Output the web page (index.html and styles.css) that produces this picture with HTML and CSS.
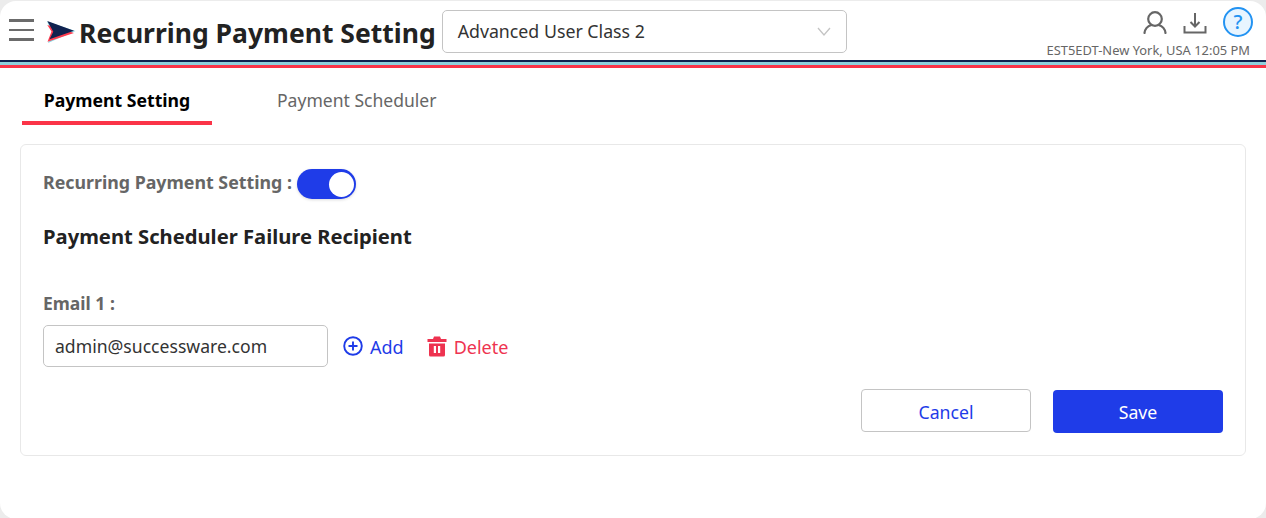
FILE: index.html
```html
<!DOCTYPE html>
<html lang="en">
<head>
<meta charset="utf-8">
<title>Recurring Payment Setting</title>
<link rel="stylesheet" href="styles.css">
</head>
<body>
<div class="app">
  <header class="header">
    <div class="menu-icon"><span></span><span></span><span></span></div>
    <svg class="logo" width="30" height="24" viewBox="0 0 30 24">
      <path d="M1 1.500 L29.500 11 L2 23 L6 12 Z" fill="#8fd8e4"/>
      <path d="M1.300 5 L5.500 11.500 L1.500 21.800 L28 13 Z" fill="#ff3b4e"/>
      <path d="M1.300 1 L28 10.700 L3.500 19.300 L7.300 11.700 Z" fill="#10224f"/>
    </svg>
    <h1 class="title">Recurring Payment Setting</h1>
    <div class="select">
      <span class="select-text">Advanced User Class 2</span>
      <svg class="chevron" width="14" height="9" viewBox="0 0 14 9"><path d="M1 1 L7 8 L13 1" fill="none" stroke="#c4c4c4" stroke-width="1.300"/></svg>
    </div>
    <div class="header-right">
      <div class="icons">
        <svg class="icon-user" width="24" height="23" viewBox="0 0 24 23"><circle cx="12" cy="8" r="6.800" fill="none" stroke="#666" stroke-width="2.200"/><path d="M1.500 22 C2 18 5 15 8.500 14 M22.500 22 C22 18 19 15 15.500 14" fill="none" stroke="#666" stroke-width="2.200" stroke-linecap="round"/></svg>
        <svg class="icon-download" width="24" height="22" viewBox="0 0 24 22"><path d="M12 1 V14 M7.500 10 L12 14.500 L16.500 10" fill="none" stroke="#666" stroke-width="2"/><path d="M1.500 14 V20.500 H22.500 V14" fill="none" stroke="#666" stroke-width="2"/></svg>
        <div class="help">?</div>
      </div>
      <div class="tz">EST5EDT-New York, USA 12:05 PM</div>
    </div>
  </header>
  <div class="stripes"></div>
  <nav class="tabs">
    <div class="tab active">Payment Setting</div>
    <div class="tab">Payment Scheduler</div>
  </nav>
  <main class="card">
    <div class="toggle-row">
      <span class="label toggle-label">Recurring Payment Setting :</span>
      <span class="toggle"><span class="knob"></span></span>
    </div>
    <h2 class="section">Payment Scheduler Failure Recipient</h2>
    <div class="label email-label">Email 1 :</div>
    <div class="email-row">
      <div class="input">admin@successware.com</div>
      <div class="action add">
        <svg width="20" height="20" viewBox="0 0 20 20"><circle cx="10" cy="10" r="8.800" fill="none" stroke="#1f3ce8" stroke-width="1.900"/><path d="M10 5.500 V14.500 M5.500 10 H14.500" stroke="#1f3ce8" stroke-width="1.900"/></svg>
        <span class="action-text">Add</span>
      </div>
      <div class="action delete">
        <svg width="20" height="21" viewBox="0 0 20 21"><path fill="#ee3350" fill-rule="evenodd" d="M7 0.500 H13 L14 3 H19.500 V6 H0.500 V3 H6 Z M2 7.500 H18 V19 Q18 20.500 16.500 20.500 H3.500 Q2 20.500 2 19 Z M6.800 10 V17 H9 V10 Z M11 10 V17 H13.200 V10 Z"/></svg>
        <span class="action-text">Delete</span>
      </div>
    </div>
    <div class="buttons">
      <button class="btn cancel" type="button">Cancel</button>
      <button class="btn save" type="button">Save</button>
    </div>
  </main>
</div>
</body>
</html>
```
FILE: styles.css
```css
* { box-sizing: border-box; }
html, body { margin: 0; padding: 0; height: 100%; }
body {
  background: #ececec;
  font-family: "Noto Sans", "Noto Sans CJK JP", sans-serif;
  overflow: hidden;
}
.app {
  width: 1266px;
  height: 518px;
  margin-top: 1px;
  background: #fff;
  border-radius: 16px;
  overflow: hidden;
}
.header {
  height: 59px;
  display: flex;
  align-items: flex-start;
}
.menu-icon {
  width: 25px;
  margin: 18px 0 0 9px;
  display: flex;
  flex-direction: column;
  gap: 7px;
}
.menu-icon span { height: 2.500px; background: #6b6b6b; display: block; }
.logo { margin: 19px 0 0 12px; flex: none; }
.title {
  margin: 11px 0 0 3px;
  font-size: 26.500px;
  line-height: 42px;
  font-weight: 700;
  color: #222;
  white-space: nowrap;
}
.select {
  width: 405px;
  height: 43px;
  margin: 9px 0 0 6px;
  border: 1px solid #c4c4c4;
  border-radius: 5px;
  display: flex;
  align-items: center;
  justify-content: space-between;
  padding: 0 15px;
  font-size: 17.750px;
  color: #333;
}
.select-text { margin-bottom: 2px; }
.header-right {
  margin-left: auto;
  padding-right: 13px;
  display: flex;
  flex-direction: column;
  align-items: flex-end;
}
.icons { display: flex; align-items: center; gap: 16px; margin-top: 6px; height: 30px; }
.icon-download { margin-top: 2px; }
.help {
  width: 30px;
  height: 30px;
  border: 2.500px solid #2393f2;
  border-radius: 50%;
  background: #e8f5ff;
  color: #2393f2;
  font-size: 20px;
  font-weight: 500;
  line-height: 25px;
  text-align: center;
}
.tz { font-size: 12.900px; color: #666; line-height: 18px; margin-top: 4px; padding-right: 3px; white-space: nowrap; }
.stripes {
  height: 8px;
  background: #8fd0dc;
  border-top: 2px solid #10224f;
  border-bottom: 3px solid #fb3448;
}
.tabs { display: flex; height: 57px; margin-left: 22px; }
.tab {
  width: 190px;
  height: 57px;
  padding-top: 19px;
  font-size: 17.550px;
  line-height: 26px;
  color: #666;
  text-align: center;
}
.tab + .tab { width: auto; margin-left: 65px; text-align: left; }
.tab.active { color: #000; font-weight: 700; font-size: 17.650px; border-bottom: 4px solid #fb3448; }
.card {
  margin: 19px 20px 0;
  height: 312px;
  border: 1px solid #e8e8e8;
  border-radius: 6px;
  padding: 0 22px;
}
.toggle-row { display: flex; align-items: center; height: 30px; margin-top: 24px; gap: 5px; }
.label { font-size: 17.800px; font-weight: 700; color: #666; }
.toggle-label { margin-bottom: 4px; }
.toggle {
  width: 59px;
  height: 30px;
  border-radius: 15px;
  background: #1f3ce8;
  display: flex;
  align-items: center;
  justify-content: flex-end;
  padding-right: 2px;
  box-shadow: 0 1px 3px rgba(0,0,0,0.15);
}
.knob { width: 25px; height: 25px; border-radius: 50%; background: #fff; display: block; }
.section { margin: 23px 0 0; font-size: 20.200px; line-height: 28px; font-weight: 700; color: #222; }
.email-label { margin-top: 41px; font-size: 17.500px; line-height: 24px; }
.email-row { display: flex; align-items: center; margin-top: 10px; height: 42px; }
.input {
  width: 285px;
  height: 42px;
  border: 1px solid #c4c4c4;
  border-radius: 5px;
  padding: 0 11px;
  line-height: 40px;
  font-size: 17.600px;
  color: #333;
}
.action { display: flex; align-items: center; gap: 7px; font-size: 18px; }
.action-text { padding-top: 2px; }
.add { color: #1f3ce8; margin-left: 15px; }
.delete { color: #ee3350; margin-left: 23px; }
.buttons { display: flex; justify-content: flex-end; gap: 22px; margin-top: 22px; }
.btn {
  width: 170px;
  height: 43px;
  border-radius: 4px;
  font-family: inherit;
  font-size: 17.700px;
  padding: 0;
}
.cancel { background: #fff; border: 1px solid #c4c4c4; color: #1f3ce8; padding-top: 2px; }
.save { background: #1f3ce8; border: 0; color: #fff; margin-top: 1px; }
```
